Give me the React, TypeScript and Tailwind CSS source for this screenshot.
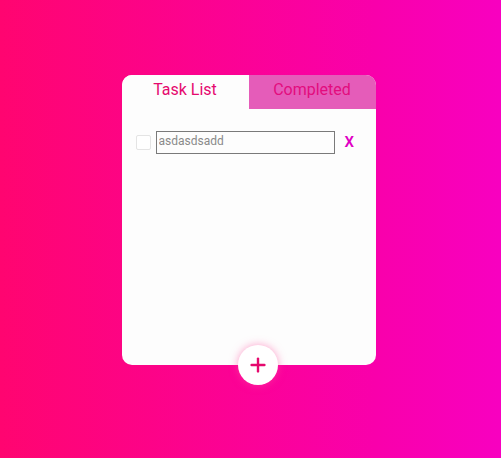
import { Plus } from "lucide-react";

type Task = { id: number; text: string };

const tasks: Task[] = [{ id: 1, text: "asdasdsadd" }];

function TaskRow({ task }: { task: Task }) {
  return (
    <div className="flex items-center">
      <span className="ml-[14px] h-[15px] w-[15px] rounded-[2px] border border-[#e4e4e4] bg-white" />
      <input
        readOnly
        value={task.text}
        className="ml-[5px] h-[23px] w-[179px] border border-[#7a7a7a] px-[2px] pb-[4px] text-[12px] text-[#8a8a8a] outline-none"
      />
      <button className="ml-[10px] text-[15px] font-semibold leading-none text-[#e000c4]">
        X
      </button>
    </div>
  );
}

export default function App() {
  return (
    <div
      className="flex h-[458px] w-full justify-center bg-[linear-gradient(to_right,#ff0570,#f900ab_75%,#f800c0)] pr-[4px] pt-[75px]"
      style={{ fontFamily: "Roboto, 'Liberation Sans', sans-serif" }}
    >
      <div className="relative h-[290px] w-[254px] rounded-[10px] bg-[#fdfdfd]">
        <div className="flex h-[34px]">
          <div className="flex flex-1 items-center justify-center rounded-tl-[10px] bg-[#fdfdfd] pb-[4px] text-[16px] text-[#e5096e]">
            Task List
          </div>
          <div className="flex flex-1 items-center justify-center rounded-tr-[10px] bg-[#e55cb9] pb-[4px] text-[16px] text-[#e30c7e]">
            Completed
          </div>
        </div>
        <div className="flex flex-col pt-[22px]">
          {tasks.map((t) => (
            <TaskRow key={t.id} task={t} />
          ))}
        </div>
        <button className="absolute bottom-[-20px] left-[116px] flex h-[40px] w-[40px] items-center justify-center rounded-full bg-white text-[#e5096e] shadow-[0_0_8px_rgba(255,80,160,0.55)]">
          <Plus size={22} strokeWidth={2.6} />
        </button>
      </div>
    </div>
  );
}
